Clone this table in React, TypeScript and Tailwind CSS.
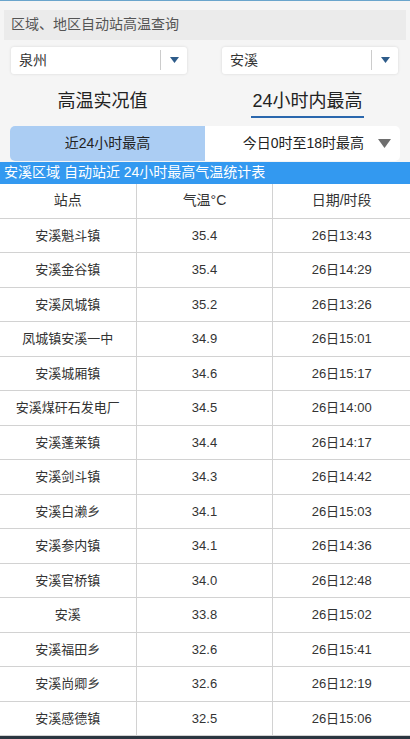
const rows = [
  ["安溪魁斗镇", "35.4", "26日13:43"],
  ["安溪金谷镇", "35.4", "26日14:29"],
  ["安溪凤城镇", "35.2", "26日13:26"],
  ["凤城镇安溪一中", "34.9", "26日15:01"],
  ["安溪城厢镇", "34.6", "26日15:17"],
  ["安溪煤矸石发电厂", "34.5", "26日14:00"],
  ["安溪蓬莱镇", "34.4", "26日14:17"],
  ["安溪剑斗镇", "34.3", "26日14:42"],
  ["安溪白濑乡", "34.1", "26日15:03"],
  ["安溪参内镇", "34.1", "26日14:36"],
  ["安溪官桥镇", "34.0", "26日12:48"],
  ["安溪", "33.8", "26日15:02"],
  ["安溪福田乡", "32.6", "26日15:41"],
  ["安溪尚卿乡", "32.6", "26日12:19"],
  ["安溪感德镇", "32.5", "26日15:06"],
];

const Select = ({ value }: { value: string }) => (
  <div className="flex h-[27px] w-[176px] items-center rounded-[3px] bg-white shadow-[0_0_3px_rgba(0,0,0,0.12)]">
    <span className="flex-1 pl-[8px] text-[14px] text-[#333]">{value}</span>
    <div className="h-[20px] w-px bg-[#ccc]" />
    <div className="flex w-[26px] justify-center">
      <svg width="9" height="6" viewBox="0 0 9 6">
        <path d="M0 0h9L4.5 6z" fill="#2e5c8a" />
      </svg>
    </div>
  </div>
);

const App = () => {
  return (
    <div
      className="flex h-[739px] w-[410px] flex-col overflow-hidden bg-[#f5f5f5]"
      style={{ fontFamily: '"Liberation Sans", "Noto Sans CJK SC", sans-serif' }}
    >
      <div className="h-px bg-[#6aa5cc]" />
      <div className="mx-[4px] mt-[9px] flex h-[30px] items-center bg-[#ebebeb] pl-[7px] text-[14px] text-[#555]">
        区域、地区自动站高温查询
      </div>
      <div className="mt-[7px] flex justify-between pl-[11px] pr-[12px]">
        <Select value="泉州" />
        <Select value="安溪" />
      </div>

      {/* tabs */}
      <div className="mt-[13px] flex h-[36px]">
        <div className="flex flex-1 justify-center text-[18px] text-[#222]">
          <span className="pt-[1px]">高温实况值</span>
        </div>
        <div className="flex flex-1 justify-center text-[18px] text-[#222]">
          <span className="h-[31px] border-b-2 border-[#2a67ad] px-[1px] pt-[1px]">24小时内最高</span>
        </div>
      </div>

      {/* segment */}
      <div className="mx-[10px] mt-[4px] flex h-[35px] overflow-hidden rounded-[5px] bg-white">
        <div className="flex w-[195px] items-center justify-center bg-[#abcdf3] text-[14px] text-[#222]">
          近24小时最高
        </div>
        <div className="flex flex-1 items-center justify-end pr-[9px] text-[14px] text-[#222]">
          <span>今日0时至18时最高</span>
          <svg className="ml-[14px]" width="13" height="9" viewBox="0 0 13 9">
            <path d="M0 0h13L6.5 9z" fill="#6e6e6e" />
          </svg>
        </div>
      </div>

      <div className="mt-px flex h-[22px] items-center bg-[#3399f0] pl-[4px] text-[14px] text-white">
        安溪区域 自动站近 24小时最高气温统计表
      </div>

      {/* table */}
      <div className="flex-1 bg-white">
        <div className="grid h-[35px] grid-cols-3 border-b border-[#d2d2d2] text-[14px] text-[#333]">
          <div className="flex items-center justify-center border-r border-[#d2d2d2]">站点</div>
          <div className="flex items-center justify-center border-r border-[#d2d2d2]">气温°C</div>
          <div className="flex items-center justify-center">日期/时段</div>
        </div>
        {rows.map((r) => (
          <div key={r[0]} className="grid h-[34.5px] grid-cols-3 border-b border-[#d2d2d2] text-[13px] text-[#333]">
            <div className="flex items-center justify-center border-r border-[#d2d2d2]">{r[0]}</div>
            <div className="flex items-center justify-center border-r border-[#d2d2d2]">{r[1]}</div>
            <div className="flex items-center justify-center">{r[2]}</div>
          </div>
        ))}
      </div>
      <div className="h-[3px] shrink-0 bg-[#2b3640]" />
    </div>
  );
};

export default App;
